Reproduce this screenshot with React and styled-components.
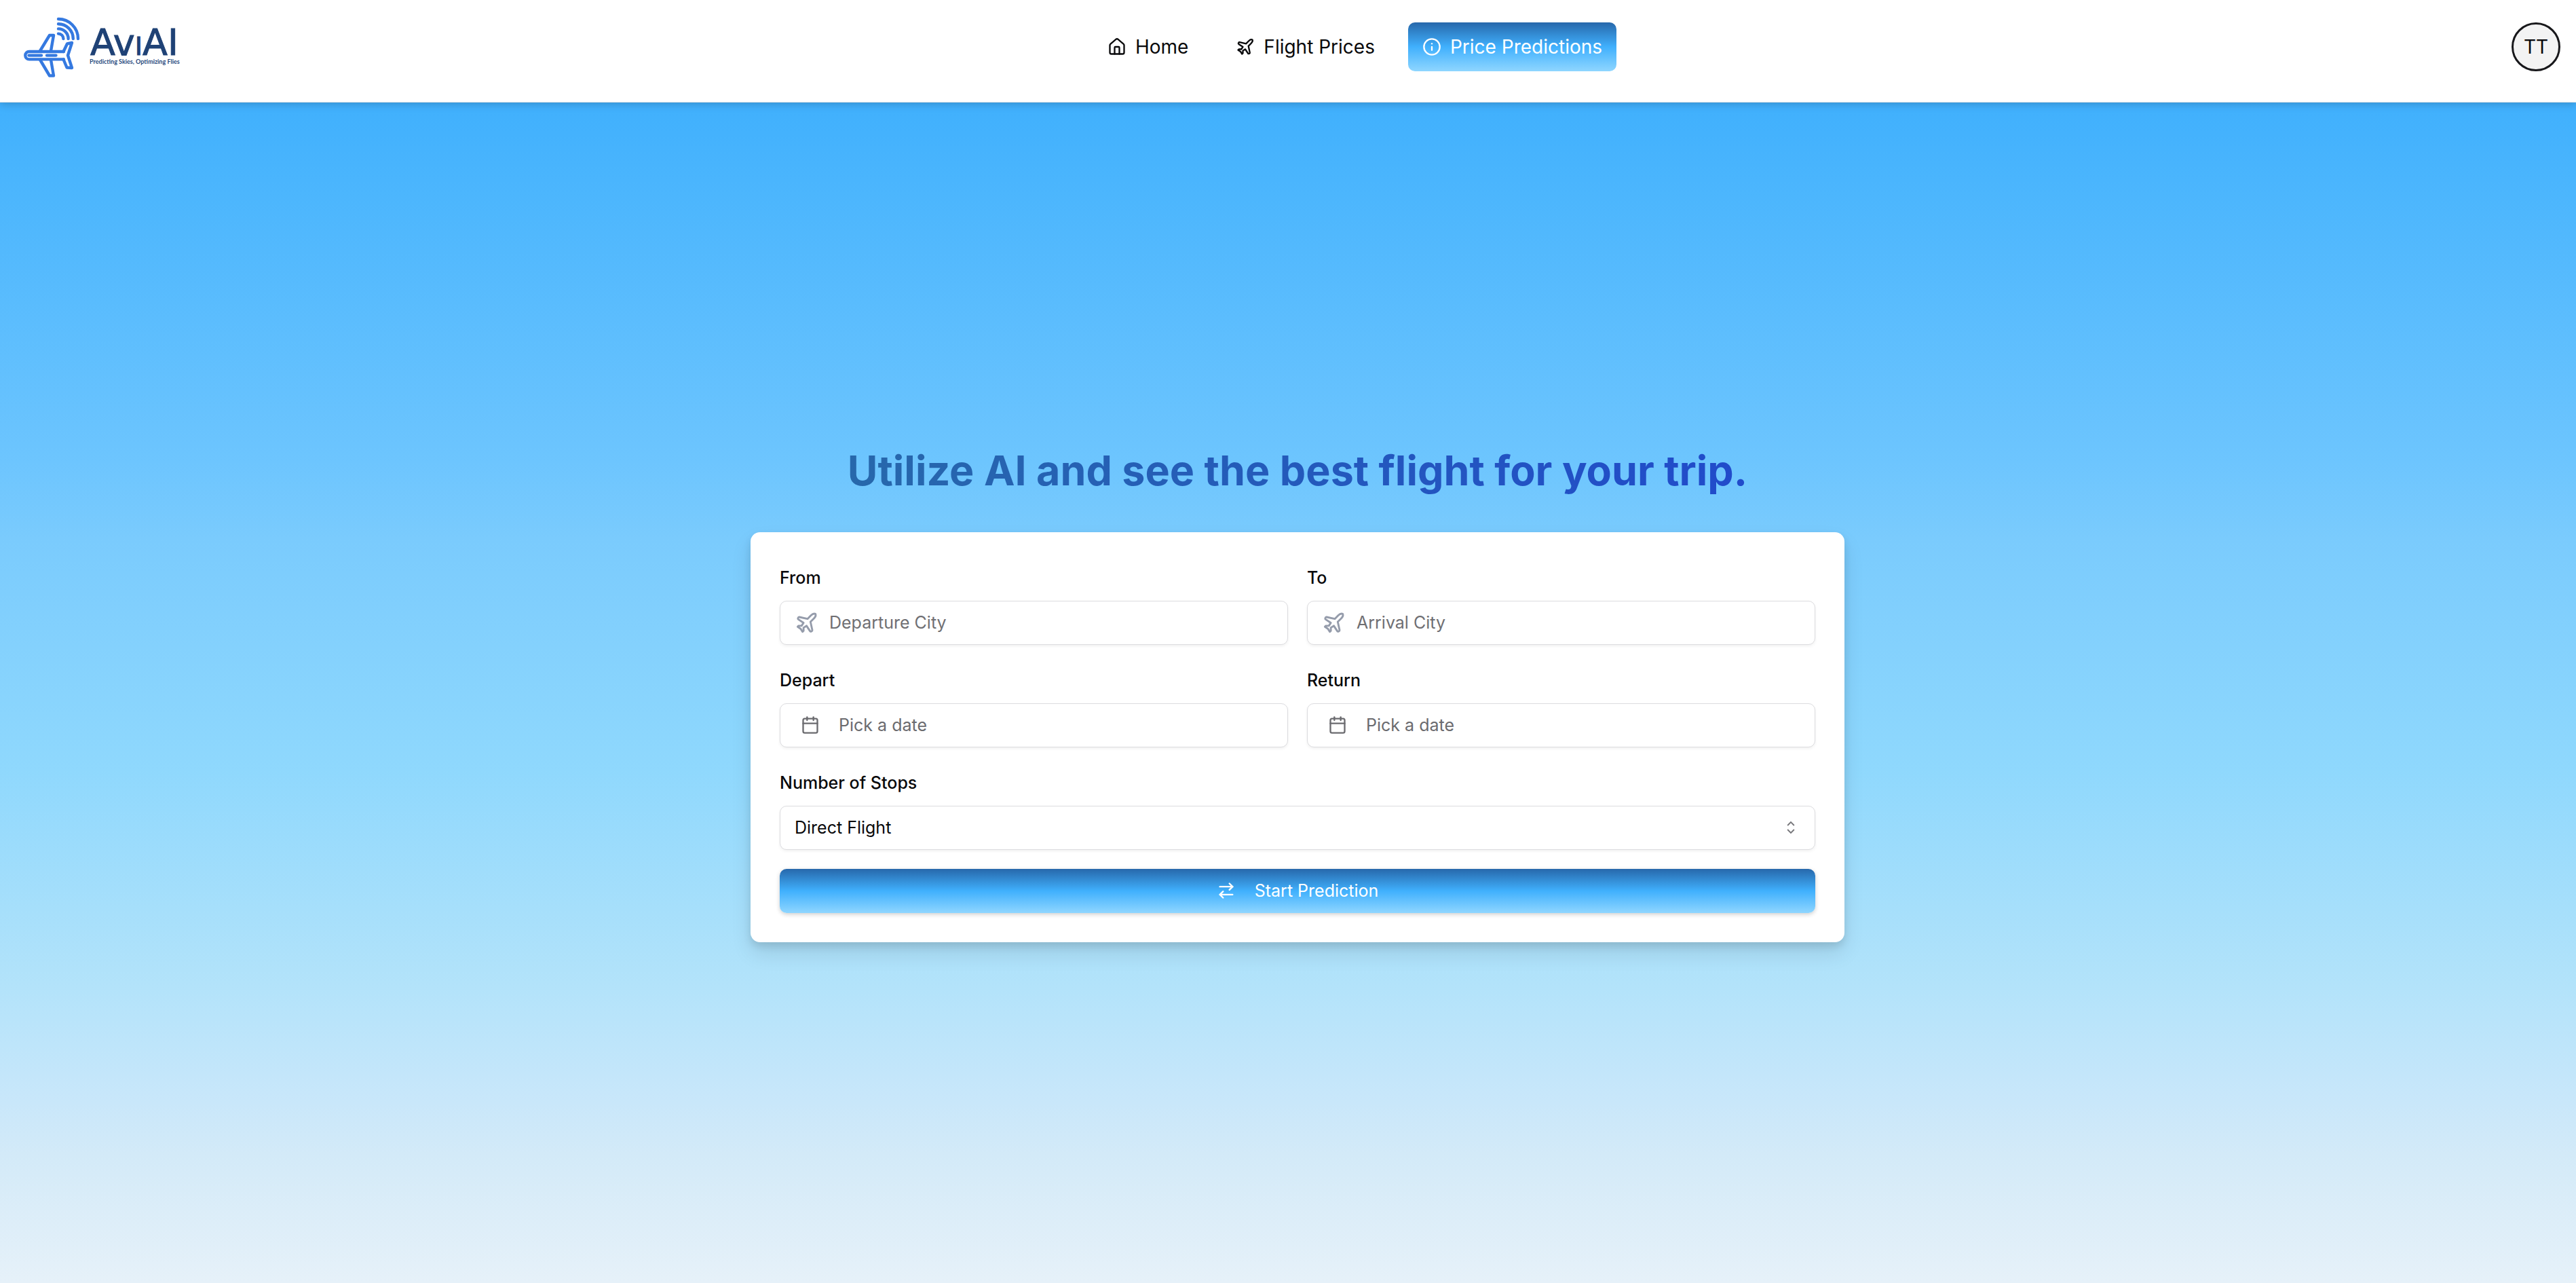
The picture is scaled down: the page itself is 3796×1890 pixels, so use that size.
import React from "react";
import styled, { createGlobalStyle, css } from "styled-components";
import { House, Plane, Info, Calendar, ArrowRightLeft } from "lucide-react";

const GlobalStyle = createGlobalStyle`
  *, *::before, *::after { box-sizing: border-box; }
  body {
    margin: 0;
    font-family: Inter, "Liberation Sans", sans-serif;
    font-size: 25px;
    color: #09090b;
    -webkit-font-smoothing: antialiased;
  }
  button, input, select { font: inherit; color: inherit; }
`;

const skyButton = css`
  color: #fff;
  background: linear-gradient(to bottom, #2768ab 0%, #40b0fd 50%, #8fd6ff 100%);
`;

const Page = styled.div`
  min-height: 100vh;
  display: flex;
  flex-direction: column;
  background: linear-gradient(
    to bottom,
    #40b0fd 8%,
    #4ab5fd 14%,
    #6dc5fe 36%,
    #7acbfd 42%,
    #8fd8fd 60%,
    #b3e3fa 77%,
    #c9e7fa 86%,
    #d3eaf8 90%,
    #e6f1f9 100%
  );
`;

const Header = styled.header`
  display: flex;
  justify-content: space-between;
  align-items: flex-start;
  padding: 0 23px 0 28px;
  background: #fff;
  border-bottom: 1px solid #e4e4e7;
  box-shadow: 0 2px 12px rgba(0, 0, 0, 0.2);
`;

const LogoLink = styled.a`
  display: block;
  svg { display: block; }
`;

const Nav = styled.nav`
  display: flex;
  gap: 28px;
  padding-top: 33px;
`;

const NavLink = styled.a`
  display: flex;
  align-items: center;
  gap: 13px;
  height: 72px;
  padding: 0 21px;
  border-radius: 10px;
  font-size: 28px;
  line-height: 40px;
  color: #09090b;
  text-decoration: none;
  ${(p) => p.$active && skyButton}
`;

const Avatar = styled.button`
  width: 72px;
  height: 72px;
  margin-top: 33px;
  padding: 0;
  border: 3px solid #18181b;
  border-radius: 50%;
  background: #f3f3f3;
  font-size: 28px;
`;

const Main = styled.main`
  flex: 1;
  display: flex;
  flex-direction: column;
  align-items: center;
  justify-content: center;
  padding: 4px 0 0 28px;
`;

const Title = styled.h1`
  margin: 0 0 56px;
  font-size: 61px;
  line-height: 70px;
  font-weight: 700;
  color: transparent;
  background: linear-gradient(to right, #2768ab, #214bcb);
  background-clip: text;
  -webkit-background-clip: text;
`;

const Card = styled.form`
  display: grid;
  grid-template-columns: 1fr 1fr;
  gap: 28px;
  width: 100%;
  max-width: 1612px;
  padding: 43px;
  border-radius: 14px;
  background: #fff;
  box-shadow: 0 16px 30px rgba(0, 0, 0, 0.1), 0 6px 12px rgba(0, 0, 0, 0.1);
`;

const Field = styled.div`
  display: flex;
  flex-direction: column;
  gap: 10px;
  grid-column: ${(p) => (p.$wide ? "1 / -1" : "auto")};
`;

const Label = styled.label`
  line-height: 48px;
  font-weight: 500;
`;

const boxed = css`
  width: 100%;
  height: 65px;
  border: 1px solid #dcdcdf;
  border-radius: 10px;
  background: #fff;
  box-shadow: 0 2px 4px rgba(0, 0, 0, 0.06);
`;

const CityBox = styled.div`
  ${boxed}
  display: flex;
  align-items: center;
  gap: 16px;
  padding: 0 21px;
  svg { flex: none; color: #959cab; }
`;

const CityInput = styled.input`
  flex: 1;
  min-width: 0;
  padding: 0;
  border: 0;
  outline: 0;
  background: none;
  &::placeholder { color: #6f6f73; opacity: 1; }
`;

const DateButton = styled.button`
  ${boxed}
  display: flex;
  align-items: center;
  gap: 28px;
  padding: 0 30px;
  color: #6b6b6f;
`;

const SelectBox = styled.div`
  ${boxed}
  display: grid;
  align-items: center;
  > * { grid-area: 1 / 1; }
  > svg { justify-self: end; margin-right: 21px; pointer-events: none; }
`;

const Select = styled.select`
  appearance: none;
  width: 100%;
  height: 100%;
  padding: 0 21px;
  border: 0;
  background: none;
`;

const Submit = styled.button`
  ${skyButton}
  grid-column: 1 / -1;
  display: flex;
  align-items: center;
  justify-content: center;
  gap: 28px;
  height: 65px;
  padding: 0;
  border: 0;
  border-radius: 10px;
  box-shadow: 0 2px 6px rgba(0, 0, 0, 0.2);
`;

const Wordmark = styled.text`
  font-family: "DejaVu Sans", sans-serif;
  font-size: 54px;
  fill: #1f4276;
  stroke: #1f4276;
`;

const SmallCaps = styled.tspan`
  font-variant-caps: small-caps;
`;

const Tagline = styled.text`
  font-family: Lato, sans-serif;
  font-weight: 700;
  font-size: 9px;
  fill: #27497c;
`;

function Logo() {
  return (
    <svg width="264" height="150" viewBox="28 0 264 150" role="img" aria-label="AviAI">
      <g fill="none" stroke="#3579e0" strokeWidth="4.4" strokeLinecap="round" strokeLinejoin="round">
        <path d="M94 76H43a5.700 5.700 0 0 0 0 11.400H94" />
        <path d="M59 75 73 52h6L75 75M59 88 73 111.500h6L75 88" />
        <path d="M93.500 76 99 64.500l7-1.500-6 18.500 6 18.500-7.500-.5-5-12" />
        <path d="M42.500 81.600H61M69 81.600H82.500" />
        <path d="M86 28a29 29 0 0 1 29 29M86 35.200a22 22 0 0 1 21.800 21.800M86 42.400a14.600 14.600 0 0 1 14.600 14.600M86 49.600a7.400 7.400 0 0 1 7.400 7.400" />
      </g>
      <Wordmark x="133" y="81">
        Av<SmallCaps>i</SmallCaps>AI
      </Wordmark>
      <Tagline x="132" y="94">Predicting Skies, Optimizing Flies</Tagline>
    </svg>
  );
}

function CaretSort() {
  return (
    <svg width="28" height="28" viewBox="0 0 15 15" fill="none" stroke="#77777b" aria-hidden="true">
      <path d="M4.900 5.900 7.500 3.300 10.100 5.900M4.900 9.100 7.500 11.700 10.100 9.100" />
    </svg>
  );
}

function CityField({ id, label, placeholder }) {
  return (
    <Field>
      <Label htmlFor={id}>{label}</Label>
      <CityBox>
        <Plane size={35} aria-hidden="true" />
        <CityInput id={id} type="text" placeholder={placeholder} />
      </CityBox>
    </Field>
  );
}

function DateField({ id, label }) {
  return (
    <Field>
      <Label htmlFor={id}>{label}</Label>
      <DateButton id={id} type="button">
        <Calendar size={28} aria-hidden="true" />
        Pick a date
      </DateButton>
    </Field>
  );
}

export default function App() {
  return (
    <Page>
      <GlobalStyle />
      <Header>
        <LogoLink href="#home">
          <Logo />
        </LogoLink>
        <Nav>
          <NavLink href="#home">
            <House size={28} aria-hidden="true" />
            Home
          </NavLink>
          <NavLink href="#prices">
            <Plane size={28} aria-hidden="true" />
            Flight Prices
          </NavLink>
          <NavLink href="#predictions" $active aria-current="page">
            <Info size={28} aria-hidden="true" />
            Price Predictions
          </NavLink>
        </Nav>
        <Avatar type="button">TT</Avatar>
      </Header>
      <Main>
        <Title>Utilize AI and see the best flight for your trip.</Title>
        <Card onSubmit={(e) => e.preventDefault()}>
          <CityField id="from" label="From" placeholder="Departure City" />
          <CityField id="to" label="To" placeholder="Arrival City" />
          <DateField id="depart" label="Depart" />
          <DateField id="return" label="Return" />
          <Field $wide>
            <Label htmlFor="stops">Number of Stops</Label>
            <SelectBox>
              <Select id="stops" defaultValue="direct">
                <option value="direct">Direct Flight</option>
              </Select>
              <CaretSort />
            </SelectBox>
          </Field>
          <Submit type="submit">
            <ArrowRightLeft size={28} aria-hidden="true" />
            Start Prediction
          </Submit>
        </Card>
      </Main>
    </Page>
  );
}
